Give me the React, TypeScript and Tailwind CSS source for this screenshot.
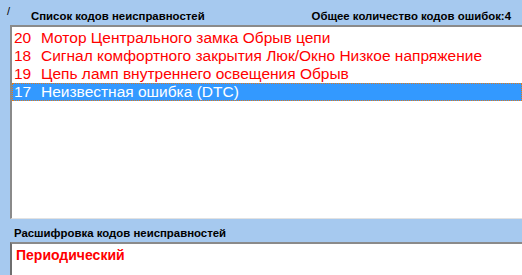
import React from 'react';

const codes = [
  { code: '20', text: 'Мотор Центрального замка Обрыв цепи' },
  { code: '18', text: 'Сигнал комфортного закрытия Люк/Окно Низкое напряжение' },
  { code: '19', text: 'Цепь ламп внутреннего освещения Обрыв' },
  { code: '17', text: 'Неизвестная ошибка (DTC)', selected: true },
];

export default function App() {
  return (
    <div
      className="w-[522px] h-[275px] overflow-hidden bg-[#a6c9ef] flex flex-col"
      style={{ fontFamily: '"Liberation Sans", Arial, sans-serif' }}
    >
      {/* header */}
      <div className="relative h-[25px] shrink-0">
        <span className="absolute left-[7px] top-[3px] text-[11px] text-black">/</span>
        <div className="flex items-end justify-between h-full pl-[31px] pr-[11px] pb-[3px]">
          <span className="text-[11.4px] font-bold text-black leading-none">Список кодов неисправностей</span>
          <span className="text-[11.4px] font-bold text-black leading-none">Общее количество кодов ошибок:4</span>
        </div>
      </div>

      {/* list */}
      <div className="ml-[10px] h-[194px] shrink-0 border-t-2 border-l-2 border-t-[#8a8a8a] border-l-[#8a8a8a] border-b border-b-[#e2e2e2] bg-white pt-[2px]">
        {codes.map((c) => (
          <div
            key={c.code}
            className={
              c.selected
                ? 'flex items-center h-[18px] bg-[#3399ff] text-white border border-dotted border-[#e07a1a] text-[15.5px] leading-none'
                : 'flex items-center h-[18px] text-[#ff0000] text-[15.5px] leading-none border border-transparent'
            }
          >
            <span className="w-[28px] pl-[1px]">{c.code}</span>
            <span>{c.text}</span>
          </div>
        ))}
      </div>

      {/* decode label */}
      <div className="h-[23px] shrink-0 flex items-center pl-[14px] pt-[6px]">
        <span className="text-[11.4px] font-bold text-black leading-none">Расшифровка кодов неисправностей</span>
      </div>

      {/* decode box */}
      <div className="ml-[10px] flex-1 border-t-2 border-l-2 border-t-[#8a8a8a] border-l-[#6e6e6e] bg-white pl-[4px] pt-[3px]">
        <span className="block text-[14px] font-bold text-[#ff0000] leading-[16px]">Периодический</span>
      </div>
    </div>
  );
}
